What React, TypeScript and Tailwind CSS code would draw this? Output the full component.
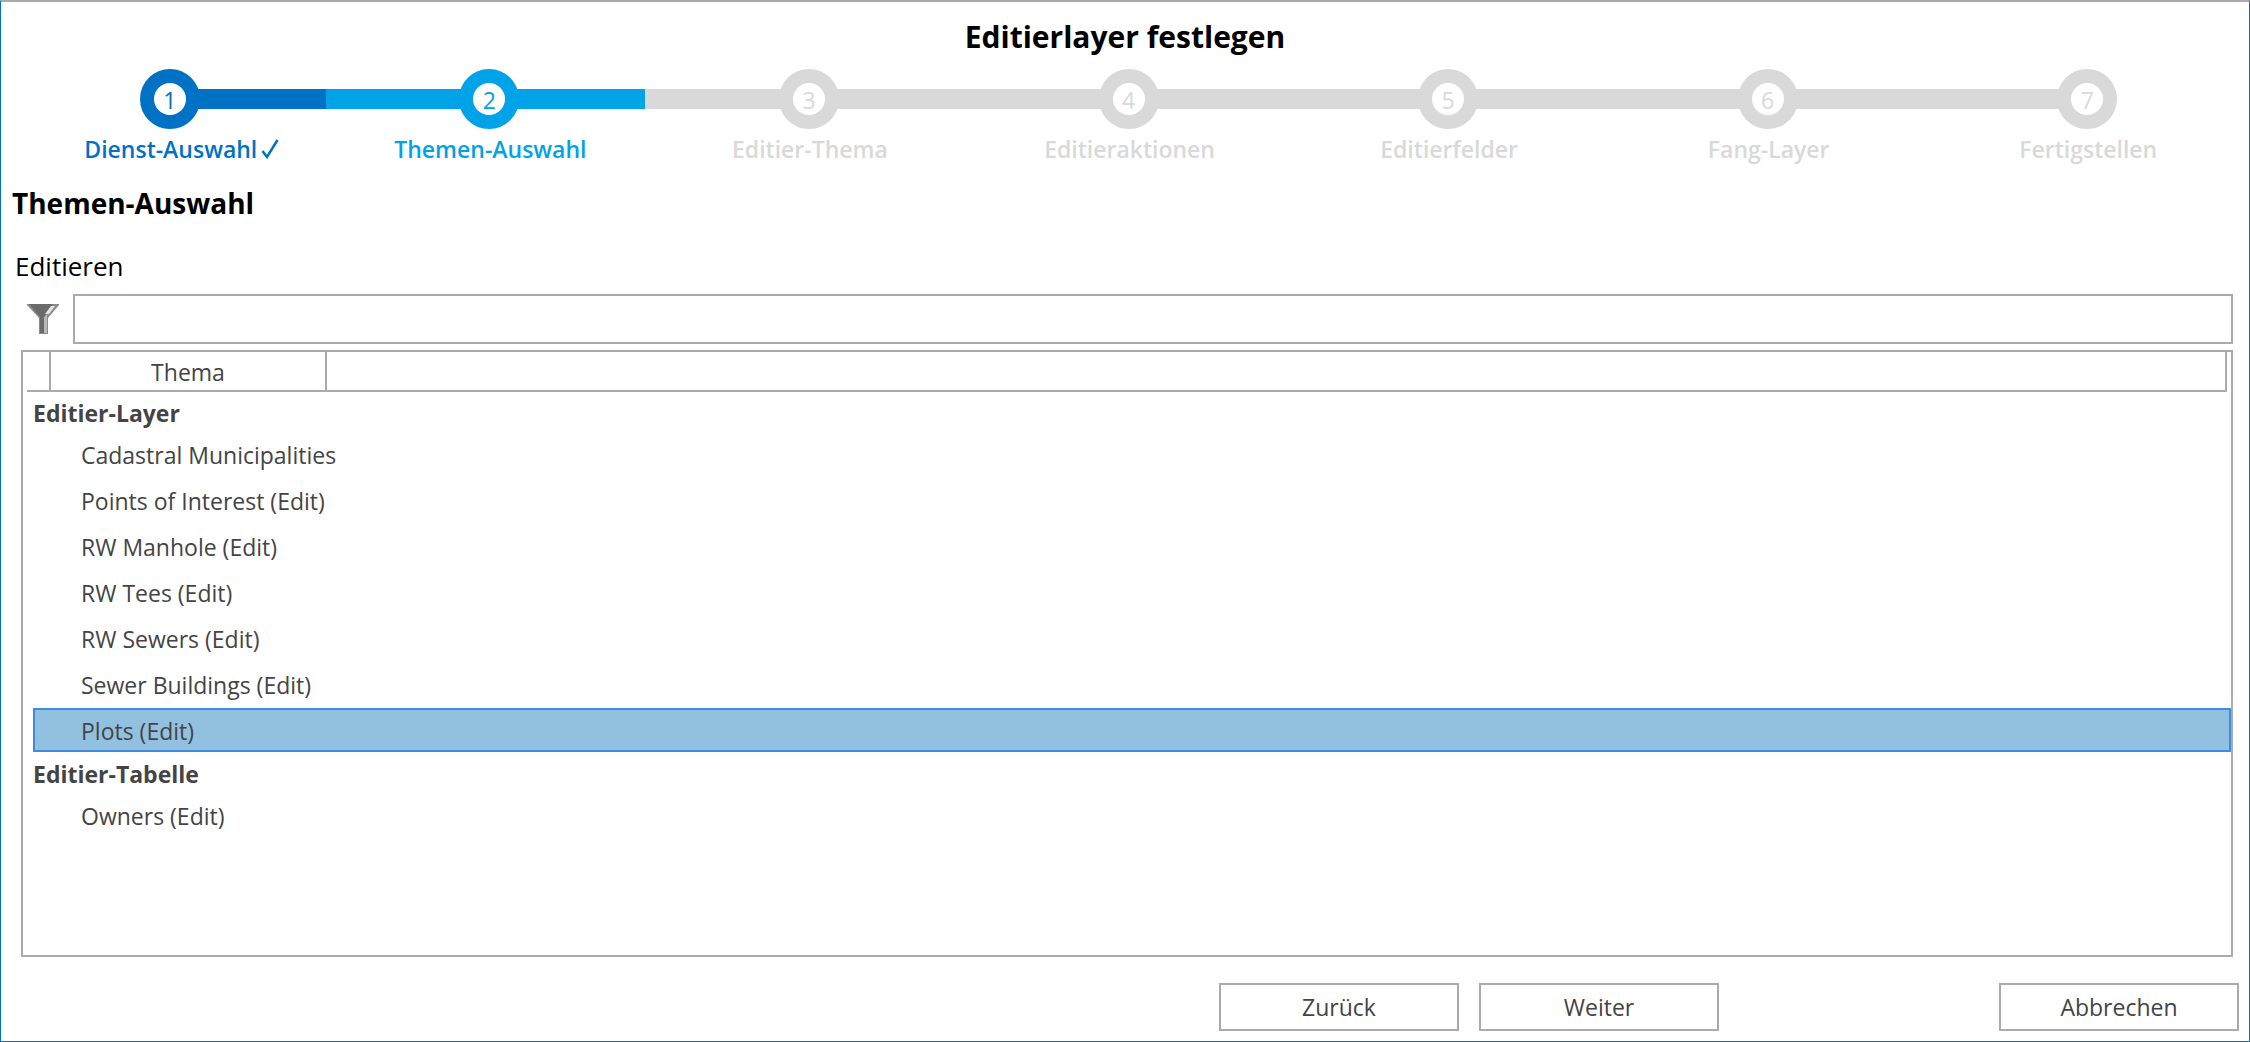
import { useState } from "react";

const steps = [
  "Dienst-Auswahl",
  "Themen-Auswahl",
  "Editier-Thema",
  "Editieraktionen",
  "Editierfelder",
  "Fang-Layer",
  "Fertigstellen",
];

const groups = [
  {
    title: "Editier-Layer",
    items: [
      "Cadastral Municipalities",
      "Points of Interest (Edit)",
      "RW Manhole (Edit)",
      "RW Tees (Edit)",
      "RW Sewers (Edit)",
      "Sewer Buildings (Edit)",
      "Plots (Edit)",
    ],
  },
  { title: "Editier-Tabelle", items: ["Owners (Edit)"] },
];

const tones = {
  done: { bar: "bg-[#0072c6]", ring: "border-[#0072c6]", text: "text-[#0072c6]" },
  active: { bar: "bg-[#00a2e8]", ring: "border-[#00a2e8]", text: "text-[#00a2e8]" },
  open: { bar: "bg-[#d9d9d9]", ring: "border-[#d9d9d9]", text: "text-[#d9d9d9]" },
};

function Step({ label, index, current }: { label: string; index: number; current: number }) {
  const state = index < current ? "done" : index === current ? "active" : "open";
  const tone = tones[state];
  const first = index === 0;
  const last = index === steps.length - 1;

  return (
    <li className={`min-w-0 flex-1 ${tone.text}`} aria-current={state === "active" ? "step" : undefined}>
      <div className="flex items-center">
        <div className={`-mr-2 h-5 grow basis-2 ${first ? "" : tone.bar}`} />
        <div
          className={`z-10 flex size-15 items-center justify-center rounded-full border-14 bg-white pt-0.5 text-[23px] font-medium ${tone.ring}`}
        >
          {index + 1}
        </div>
        <div className={`-ml-2 h-5 grow basis-0 ${last ? "" : tone.bar}`} />
      </div>
      <div className="mt-1 flex items-center justify-center gap-1 pl-[10px] text-[23px] leading-8 font-semibold whitespace-nowrap">
        {label}
        {/* the tick hangs outside so the label stays centred under its circle */}
        {state === "done" && (
          <svg
            className="-mr-[22px] h-5 w-[18px]"
            viewBox="0 0 18 20"
            fill="none"
            stroke="currentColor"
            strokeWidth="2.5"
          >
            <path d="M1.5 12L6 18L16.5 1" />
          </svg>
        )}
      </div>
    </li>
  );
}

function FilterIcon() {
  return (
    <svg className="size-8" viewBox="0 0 32 32">
      <path d="M0 1h32v1L21 15v16h-9V15L0 2z" fill="#8c8c8c" />
      <path d="M2 1h24l-8 12v17h-5V14z" fill="#6b6b6b" />
      <path d="M24 3h4l-6 8h-4z" fill="#e4e4e4" />
      <path d="M17 14l3-3v19h-3z" fill="#b8b8b8" />
    </svg>
  );
}

function WizardButton({ children }: { children: string }) {
  return (
    <button type="button" className="h-12 w-60 border-2 border-[#ababab] bg-white text-[#444]">
      {children}
    </button>
  );
}

export default function App() {
  const [filter, setFilter] = useState("");
  const [selected, setSelected] = useState("Plots (Edit)");

  return (
    <main className="flex min-h-screen flex-col border border-t-2 border-[#0072c6] border-t-[#ababab] bg-white font-['Open_Sans','Noto_Sans',sans-serif] text-[23px] text-[#444]">
      <h1 className="pt-[15px] text-center text-[30px] leading-10 font-bold text-black">Editierlayer festlegen</h1>

      <ol className="mt-3 flex pr-[6px] pl-[5px]">
        {steps.map((label, i) => (
          <Step key={label} label={label} index={i} current={1} />
        ))}
      </ol>

      <h2 className="mt-[18px] pl-[11px] text-[28px] leading-10 font-bold text-black">Themen-Auswahl</h2>
      <label htmlFor="filter" className="mt-[23px] pl-[14px] text-[26px] leading-10 text-black">
        Editieren
      </label>

      <div className="mt-2 flex items-center gap-[14px] pr-4 pl-[26px]">
        <FilterIcon />
        <input
          id="filter"
          type="text"
          value={filter}
          onChange={(e) => setFilter(e.target.value)}
          className="h-[50px] min-w-0 flex-1 border-2 border-[#ababab] px-2 outline-none"
        />
      </div>

      <div className="mt-[6px] mr-4 ml-5 flex-1 border-2 border-[#ababab]">
        <table className="w-full table-fixed border-collapse">
          <colgroup>
            <col className="w-7" />
            <col className="w-[276px]" />
            <col />
          </colgroup>
          <thead>
            <tr>
              <th className="p-0">
                <div className="ml-1 h-10 border-r-2 border-b-2 border-[#ababab]" />
              </th>
              <th className="p-0 font-normal">
                <div className="h-10 border-r-2 border-b-2 border-[#ababab] leading-10">Thema</div>
              </th>
              <th className="p-0">
                <div className="mr-1 h-10 border-r-2 border-b-2 border-[#ababab]" />
              </th>
            </tr>
          </thead>
          {groups.map((group) => (
            <tbody key={group.title}>
              <tr>
                <th colSpan={3} scope="rowgroup" className="p-0 pt-1 pl-[10px] text-left leading-[35px] font-bold">
                  {group.title}
                </th>
              </tr>
              {group.items
                .filter((item) => item.toLowerCase().includes(filter.toLowerCase()))
                .map((item) => (
                  <tr key={item}>
                    <td colSpan={3} className="py-px pr-0 pl-[10px]">
                      <button
                        type="button"
                        aria-pressed={item === selected}
                        onClick={() => setSelected(item)}
                        className={`block h-11 w-full border-2 pt-0.5 pl-[46px] text-left ${
                          item === selected ? "border-[#3e8ddd] bg-[#92c0e0]" : "border-transparent"
                        }`}
                      >
                        {item}
                      </button>
                    </td>
                  </tr>
                ))}
            </tbody>
          ))}
        </table>
      </div>

      <footer className="mt-[26px] mb-[10px] flex justify-end gap-5 pr-[10px]">
        <WizardButton>Zurück</WizardButton>
        <WizardButton>Weiter</WizardButton>
        <div className="w-60" />
        <WizardButton>Abbrechen</WizardButton>
      </footer>
    </main>
  );
}
